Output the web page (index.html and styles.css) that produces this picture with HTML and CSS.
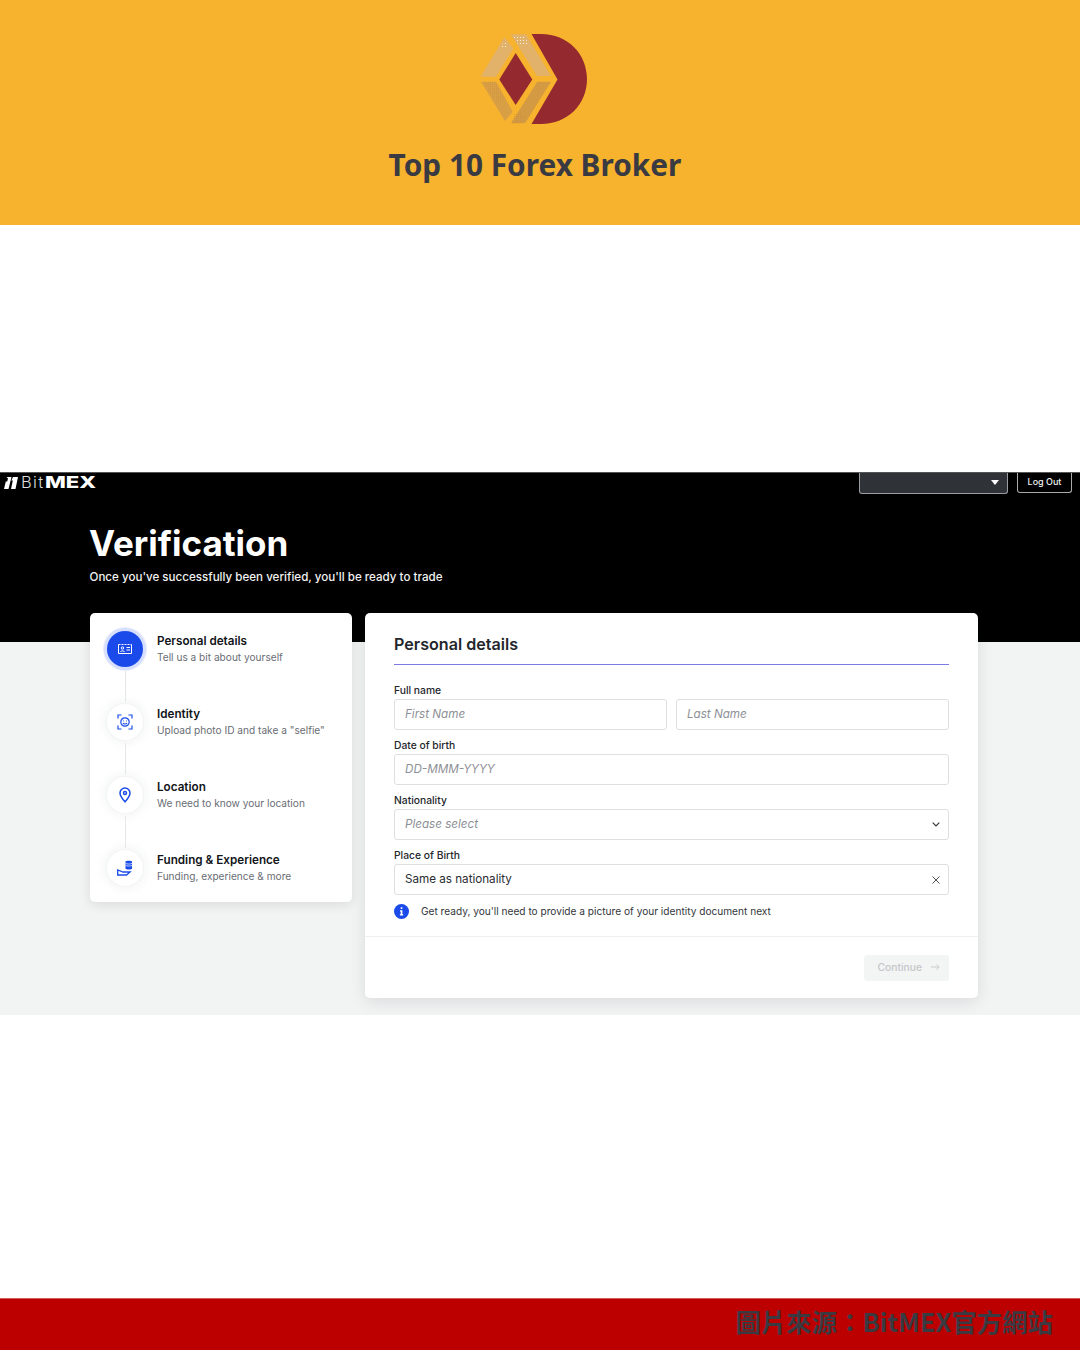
FILE: index.html
```html
<!DOCTYPE html>
<html lang="zh-Hant">
<head>
<meta charset="utf-8">
<title>Top 10 Forex Broker</title>
<link rel="stylesheet" href="styles.css">
</head>
<body>
<header class="banner">
  <svg class="brand-mark" viewBox="480 34 107 90" width="107" height="90" aria-hidden="true">
    <defs>
      <pattern id="speck-light" width="3" height="3" patternUnits="userSpaceOnUse">
        <rect x="1" y="1" width="1" height="1" fill="#FFF3DC"/>
      </pattern>
      <pattern id="speck-dark" width="2" height="2" patternUnits="userSpaceOnUse">
        <rect width="1" height="1" fill="#C98A3C" fill-opacity=".55"/>
      </pattern>
    </defs>
    <path fill="#942A2F" d="M531.500 34H541C568 34 587 54 587 79S568 124 541 124H531.500L557.500 79.500Z"/>
    <path fill="#942A2F" d="M515.700 53 532.300 79.500 515.700 105 499.300 79.500Z"/>
    <path fill="#E3B26A" d="M504.300 37.300 513.300 48.300 496 76.700H480.700Z"/>
    <path fill="#E2B16A" d="M510.700 34.300H526L551 76H537Z"/>
    <path fill="#D99F45" d="M481 81.700H496L512.700 111.700 505 121Z"/>
    <path fill="#D39A43" d="M537.300 81.700H551L525 123.300H511Z"/>
    <path fill="url(#speck-light)" d="M513 36H524L530 46H519ZM504 40 508 45 504 50 501 48Z"/>
    <path fill="url(#speck-dark)" d="M483 82H496L505 98 497 104Z"/>
    <path fill="url(#speck-dark)" d="M514 114 520 112 526 116 522 123H512Z"/>
  </svg>
  <h1 class="banner-title">Top 10 Forex Broker</h1>
</header>

<div class="gap-top"></div>

<section class="shot">
  <div class="hero">
    <div class="topbar">
      <div class="logo">
        <svg class="logo-mark" viewBox="0 0 14 12" width="14" height="12" aria-hidden="true">
          <path fill="#fff" d="M2.500 0H7.500L4.500 12H0L1.800 4.500H3.200L4 1.500ZM9 0H14L11.500 12H7L8.800 3.500H7.300Z"/>
        </svg>
        <span class="logo-bit">Bit</span><span class="logo-mex">MEX</span>
      </div>
      <div class="topbar-actions">
        <div class="account-select"><span class="caret"></span></div>
        <button class="logout">Log Out</button>
      </div>
    </div>
    <h2 class="hero-title">Verification</h2>
    <p class="hero-sub">Once you've successfully been verified, you'll be ready to trade</p>
  </div>

  <div class="content">
    <aside class="steps">
      <div class="step step-active">
        <div class="step-icon">
          <svg viewBox="0 0 14 12" width="14" height="12" fill="none" stroke="#fff" stroke-width="1" aria-hidden="true">
            <path d="M.5 10.500V1.500M13.500 1.500V10.500H.5"/>
            <path d="M.5 1.500H13.500" stroke-dasharray="2 1"/>
            <circle cx="4.500" cy="5" r="1.200"/>
            <path d="M2.500 9C2.500 7.500 6.500 7.500 6.500 9M8.500 4.500H12M8.500 7H12"/>
          </svg>
        </div>
        <div class="step-text">
          <div class="step-title">Personal details</div>
          <div class="step-sub">Tell us a bit about yourself</div>
        </div>
      </div>
      <div class="step">
        <div class="step-icon">
          <svg viewBox="0 0 16 16" width="16" height="16" fill="none" stroke="#1A4BEA" stroke-width="1.200" aria-hidden="true">
            <path d="M1 4.500V1H4.500M11.500 1H15V4.500M15 11.500V15H11.500M4.500 15H1V11.500"/>
            <circle cx="8" cy="8" r="4.200"/>
            <path d="M6 9C7 10.300 9 10.300 10 9M6.300 6.800H6.900M9.100 6.800H9.700"/>
          </svg>
        </div>
        <div class="step-text">
          <div class="step-title">Identity</div>
          <div class="step-sub">Upload photo ID and take a "selfie"</div>
        </div>
      </div>
      <div class="step">
        <div class="step-icon">
          <svg viewBox="0 0 12 16" width="12" height="16" fill="none" stroke="#1A4BEA" stroke-width="1.500" aria-hidden="true">
            <path d="M6 14.800C3 11.500 1 9 1 6A5 5 0 0 1 11 6C11 9 9 11.500 6 14.800Z"/>
            <circle cx="6" cy="6" r="1.500"/>
          </svg>
        </div>
        <div class="step-text">
          <div class="step-title">Location</div>
          <div class="step-sub">We need to know your location</div>
        </div>
      </div>
      <div class="step">
        <div class="step-icon">
          <svg viewBox="0 0 16 16" width="16" height="16" aria-hidden="true">
            <path fill="#1A4BEA" d="M8.500 1.500C8.500.6 15 .6 15 1.500V8.500C15 9.800 8.500 9.800 8.500 8.500Z"/>
            <path fill="none" stroke="#fff" stroke-width=".7" d="M8.500 3.300C10 4.300 13.500 4.300 15 3.300M8.500 5.300C10 6.300 13.500 6.300 15 5.300"/>
            <path fill="none" stroke="#1A4BEA" stroke-width="1.300" d="M.7 10V15H9.500L13 12H6L.7 10Z"/>
          </svg>
        </div>
        <div class="step-text">
          <div class="step-title">Funding &amp; Experience</div>
          <div class="step-sub">Funding, experience &amp; more</div>
        </div>
      </div>
    </aside>

    <main class="form-card">
      <div class="form-body">
        <h3 class="form-title">Personal details</h3>
        <div class="field field-first">
          <div class="label">Full name</div>
          <div class="input-row">
            <div class="input placeholder">First Name</div>
            <div class="input placeholder">Last Name</div>
          </div>
        </div>
        <div class="field">
          <div class="label">Date of birth</div>
          <div class="input placeholder">DD-MMM-YYYY</div>
        </div>
        <div class="field">
          <div class="label">Nationality</div>
          <div class="input placeholder input-icon">Please select
            <svg viewBox="0 0 8 5" width="8" height="5" fill="none" stroke="#33363b" stroke-width="1.200" aria-hidden="true"><path d="M.7.7 4 4 7.300.7"/></svg>
          </div>
        </div>
        <div class="field">
          <div class="label">Place of Birth</div>
          <div class="input input-icon">Same as nationality
            <svg viewBox="0 0 8 8" width="8" height="8" fill="none" stroke="#4a4d52" stroke-width="1" aria-hidden="true"><path d="M.5.5 7.500 7.500M7.500.5.5 7.500"/></svg>
          </div>
        </div>
        <div class="notice">
          <svg viewBox="0 0 15 15" width="15" height="15" aria-hidden="true">
            <circle cx="7.500" cy="7.500" r="7.500" fill="#1A4BEA"/>
            <path fill="#fff" d="M6.700 3.200H8.400V4.900H6.700ZM6 6.200H8.400V10.300H9.200V11.500H5.900V10.300H6.700V7.400H6Z"/>
          </svg>
          <span>Get ready, you'll need to provide a picture of your identity document next</span>
        </div>
      </div>
      <div class="form-foot">
        <button class="continue">Continue
          <svg viewBox="0 0 10 8" width="9" height="8" fill="none" stroke="#c4c7c9" stroke-width="1" aria-hidden="true"><path d="M0 4H9M6 1 9 4 6 7"/></svg>
        </button>
      </div>
    </main>
  </div>
</section>

<div class="gap-bottom"></div>

<footer class="source"><span class="source-text">圖片來源：BitMEX官方網站</span></footer>
</body>
</html>
```
FILE: styles.css
```css
* { box-sizing: border-box; }
html, body { margin: 0; padding: 0; }
body {
  width: 1080px;
  height: 1350px;
  overflow: hidden;
  background: #fff;
  font-family: "Inter", "Liberation Sans", sans-serif;
}

/* Banner */
.banner {
  height: 225px;
  background: #F7B32D;
  display: flex;
  flex-direction: column;
  align-items: center;
  padding: 34px 10px 0 0;
}
.brand-mark { display: block; margin-right: 3px; }
.banner-title {
  margin: 16px 0 0;
  font: 700 29.800px/50px "Noto Sans", sans-serif;
  color: #3A3A42;
  white-space: nowrap;
}

.gap-top { height: 247px; }
.gap-bottom { height: 283px; }

/* Screenshot */
.shot {
  height: 543px;
  background: #F2F3F3;
}
.hero {
  height: 170px;
  background: #000;
  color: #fff;
  border-top: 1px solid #555;
}
.topbar {
  display: flex;
  justify-content: space-between;
  align-items: flex-start;
  padding: 0 8px 0 4px;
  height: 21px;
}
.logo {
  display: flex;
  align-items: center;
  height: 19px;
  color: #fff;
  line-height: 19px;
}
.logo-mark { margin-right: 3px; }
.logo-bit {
  font: 300 16.500px/19px "Inter", sans-serif;
  letter-spacing: 1.300px;
  color: #ddd;
  margin-right: 1px;
}
.logo-mex {
  font: 800 16.500px/19px "Inter", sans-serif;
  transform: scaleX(1.34);
  transform-origin: left center;
}
.topbar-actions {
  display: flex;
  align-items: flex-start;
  gap: 9px;
}
.account-select {
  width: 149px;
  height: 21px;
  background: #2F3237;
  border: 1px solid #9a9da1;
  border-top: 0;
  border-radius: 0 0 3px 3px;
  position: relative;
}
.caret {
  position: absolute;
  right: 8px;
  top: 7px;
  border-left: 4px solid transparent;
  border-right: 4px solid transparent;
  border-top: 5px solid #fff;
}
.logout {
  width: 55px;
  height: 20px;
  padding: 0 0 2px;
  background: #000;
  color: #f0f0f0;
  border: 1px solid #aaa;
  border-top: 0;
  border-radius: 0 0 3px 3px;
  font: 500 9px/16px "Inter", sans-serif;
}
.hero-title {
  margin: 24px 0 0 89px;
  font: 700 35px/50px "Inter", sans-serif;
  color: #fff;
}
.hero-sub {
  margin: 0 0 0 89.500px;
  font: 500 11.600px/18px "Inter", sans-serif;
  color: #f2f2f2;
}

.content {
  display: flex;
  align-items: flex-start;
  gap: 13px;
  margin: -29px 0 0 90px;
}

/* Steps card */
.steps {
  width: 262px;
  height: 289px;
  background: #fff;
  border-radius: 5px;
  box-shadow: 0 3px 12px rgba(20, 25, 35, .1);
  padding: 18px 0 0 17px;
  display: flex;
  flex-direction: column;
  gap: 37px;
}
.step {
  display: flex;
  align-items: flex-start;
  gap: 14px;
  height: 36px;
  position: relative;
}
.step:not(:last-child)::after {
  content: "";
  position: absolute;
  left: 18px;
  top: 39px;
  width: 1px;
  height: 32px;
  background: #E6E7E9;
}
.step-icon {
  flex: none;
  width: 36px;
  height: 36px;
  border-radius: 50%;
  background: #fff;
  display: flex;
  align-items: center;
  justify-content: center;
  box-shadow: 0 0 0 1px #F3F4F5, 0 0 8px 4px rgba(225, 228, 232, .35);
}
.step-active .step-icon {
  background: #1A4BEA;
  box-shadow: 0 0 0 3px #D5DEFC, 0 0 0 4px #E8EDFD;
}
.step-text { padding-top: 2px; }
.step-title {
  font: 600 11.700px/17px "Inter", sans-serif;
  color: #111418;
  white-space: nowrap;
}
.step-sub {
  font: 400 10.150px/15px "Inter", sans-serif;
  color: #6A6E75;
  white-space: nowrap;
}

/* Form card */
.form-card {
  width: 613px;
  height: 385px;
  background: #fff;
  border-radius: 5px;
  box-shadow: 0 4px 16px rgba(20, 25, 35, .1);
  display: flex;
  flex-direction: column;
}
.form-body {
  height: 324px;
  padding: 0 29px;
  border-bottom: 1px solid #EEEFF0;
}
.form-title {
  margin: 0;
  height: 52px;
  border-bottom: 1px solid #7B7BE3;
  font: 600 16.100px/63px "Inter", sans-serif;
  color: #23262B;
}
.field { margin-top: 8px; }
.field-first { margin-top: 18px; }
.label {
  height: 16px;
  font: 500 10.300px/14px "Inter", sans-serif;
  color: #23262B;
}
.input {
  height: 31px;
  flex: 1;
  border: 1px solid #DEDFE1;
  border-radius: 3px;
  background: #fff;
  padding: 0 10px;
  display: flex;
  align-items: center;
  justify-content: space-between;
  font: 400 11.650px/29px "Inter", sans-serif;
  color: #2A2D32;
}
.placeholder {
  font-style: italic;
  color: #8D9096;
}
.input-row {
  display: flex;
  gap: 9px;
}
.input-icon { padding-right: 8px; }
.notice {
  display: flex;
  align-items: center;
  gap: 12px;
  margin-top: 8px;
  font: 400 10.150px/17px "Inter", sans-serif;
  color: #34373C;
  white-space: nowrap;
}
.notice svg { flex: none; }
.form-foot {
  display: flex;
  justify-content: flex-end;
  padding: 18px 29px 0 0;
}
.continue {
  width: 85px;
  height: 26px;
  padding: 0 9px 2px 0;
  border: 0;
  border-radius: 3px;
  background: #F3F4F4;
  color: #C4C7C9;
  display: flex;
  align-items: center;
  justify-content: flex-end;
  gap: 9px;
  font: 500 10.300px/24px "Inter", sans-serif;
}

/* Footer */
.source {
  height: 52px;
  background: #BC0000;
  border-top: 1px solid #D65A5A;
  display: flex;
  align-items: center;
  justify-content: flex-end;
  padding: 0 27px 7px 0;
  font: 700 25.400px/40px "Noto Sans CJK TC", "Noto Sans", sans-serif;
  color: #3A3A42;
  white-space: nowrap;
}
```
